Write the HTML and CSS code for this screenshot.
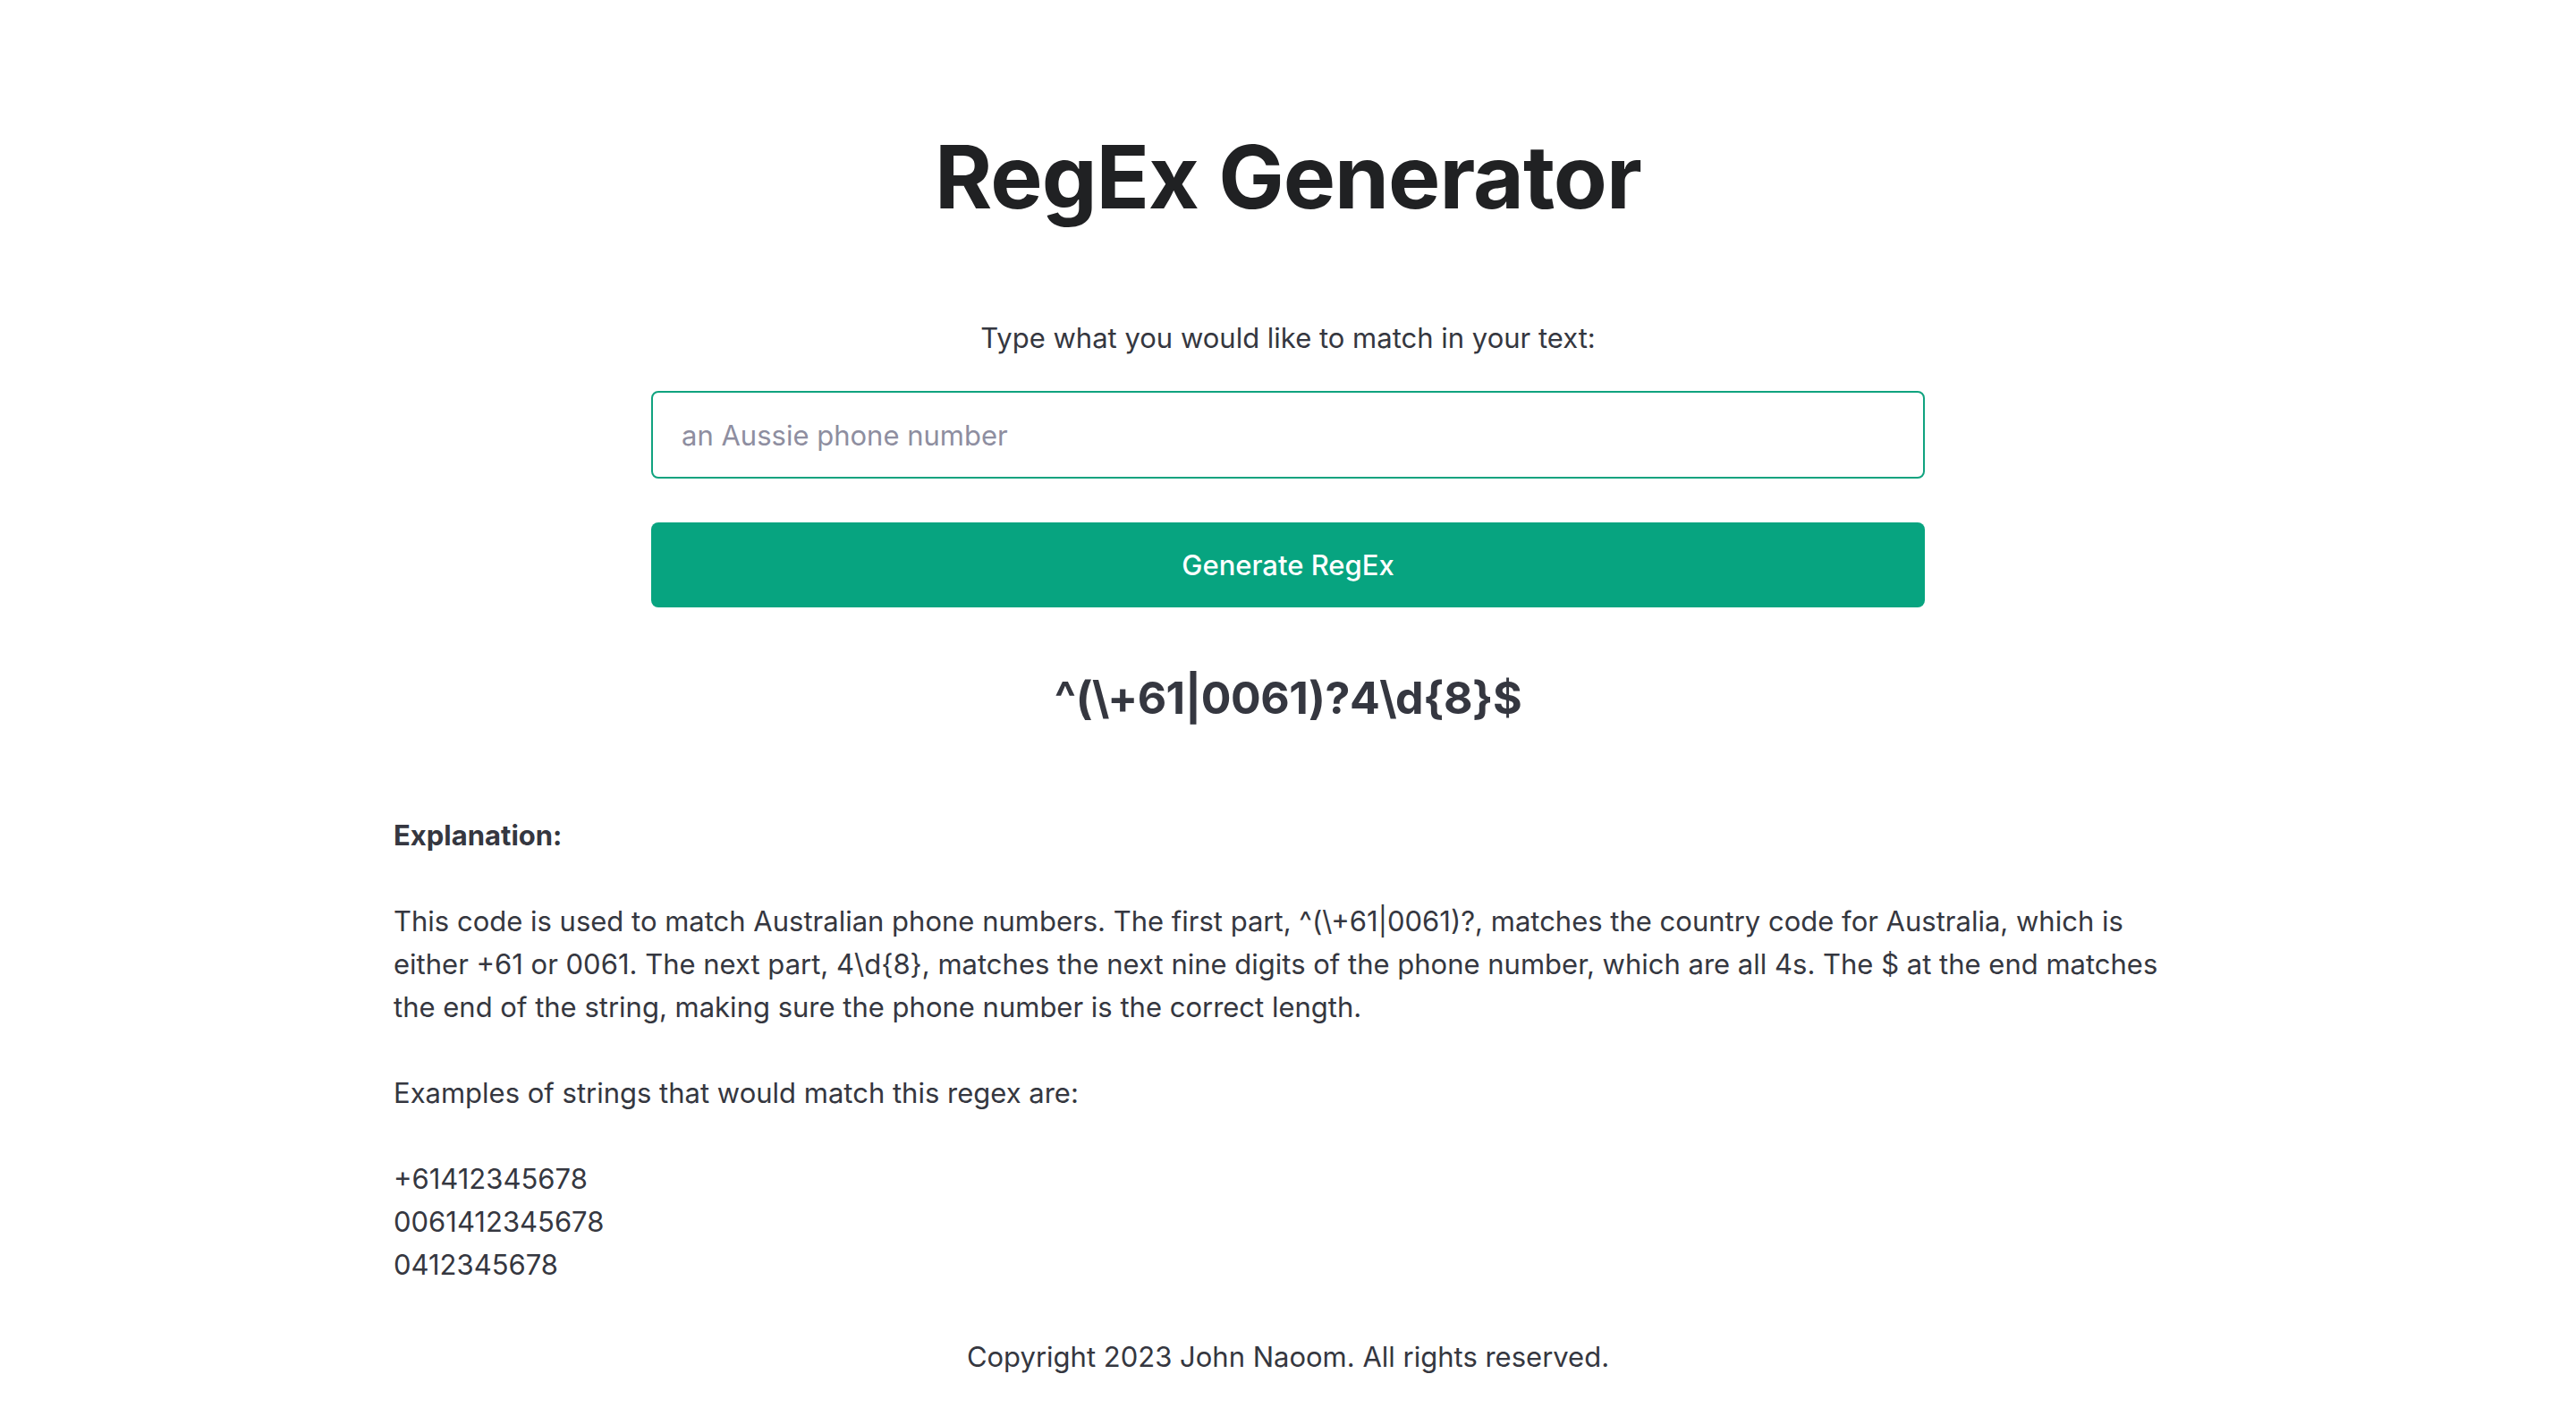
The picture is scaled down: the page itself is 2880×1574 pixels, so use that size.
FILE: index.html
```html
<!DOCTYPE html>
<html lang="en">
<head>
<meta charset="utf-8">
<title>RegEx Generator</title>
<link rel="stylesheet" href="styles.css">
</head>
<body>
<main class="main">
  <h1 class="title">RegEx Generator</h1>
  <form class="form">
    <label class="label" for="query">Type what you would like to match in your text:</label>
    <input class="input" id="query" type="text" placeholder="an Aussie phone number">
    <button class="button" type="button">Generate RegEx</button>
  </form>
  <div class="result">^(\+61|0061)?4\d{8}$</div>
  <div class="explanation">
    <p class="strong">Explanation:</p>
    <p>This code is used to match Australian phone numbers. The first part, ^(\+61|0061)?, matches the country code for Australia, which is either +61 or 0061. The next part, 4\d{8}, matches the next nine digits of the phone number, which are all 4s. The $ at the end matches the end of the string, making sure the phone number is the correct length.</p>
    <p>Examples of strings that would match this regex are:</p>
    <p>+61412345678<br>0061412345678<br>0412345678</p>
  </div>
</main>
<footer class="footer">Copyright 2023 John Naoom. All rights reserved.</footer>
</body>
</html>
```
FILE: styles.css
```css
html, body {
  margin: 0;
  padding: 0;
  background: #ffffff;
}
body {
  font-family: Inter, "Noto Sans", sans-serif;
  color: #353740;
  font-size: 31px;
}
.main {
  display: flex;
  flex-direction: column;
  align-items: center;
  padding-top: 139px;
}
.title {
  margin: 0;
  font-size: 98px;
  line-height: 118px;
  font-weight: 700;
  color: #202123;
  letter-spacing: -1px;
}
.form {
  display: flex;
  flex-direction: column;
  align-items: center;
  width: 1424px;
  margin-top: 101px;
}
.label {
  font-size: 31px;
  line-height: 40px;
  color: #353740;
  margin-bottom: 39px;
}
.input {
  box-sizing: border-box;
  width: 100%;
  height: 98px;
  padding: 0 32px;
  border: 2px solid #10a37f;
  border-radius: 8px;
  font-family: inherit;
  font-size: 31px;
  color: #353740;
  outline: none;
}
.input::placeholder {
  color: #8e8ea0;
  opacity: 1;
}
.button {
  box-sizing: border-box;
  width: 100%;
  height: 95px;
  margin-top: 49px;
  border: none;
  border-radius: 8px;
  background: #07a480;
  color: #ffffff;
  font-family: inherit;
  font-size: 31px;
  font-weight: 500;
}
.result {
  margin-top: 69px;
  font-size: 50px;
  line-height: 64px;
  font-weight: 700;
  letter-spacing: -0.5px;
  color: #353740;
}
.explanation {
  box-sizing: border-box;
  width: 2000px;
  margin-top: 98px;
  font-size: 31px;
  line-height: 48px;
}
.explanation p {
  margin: 0 0 48px;
}
.explanation p:last-child {
  margin-bottom: 0;
}
.strong {
  font-weight: 700;
}
.footer {
  text-align: center;
  margin-top: 59px;
  font-size: 31px;
  line-height: 40px;
  color: #353740;
}
```
